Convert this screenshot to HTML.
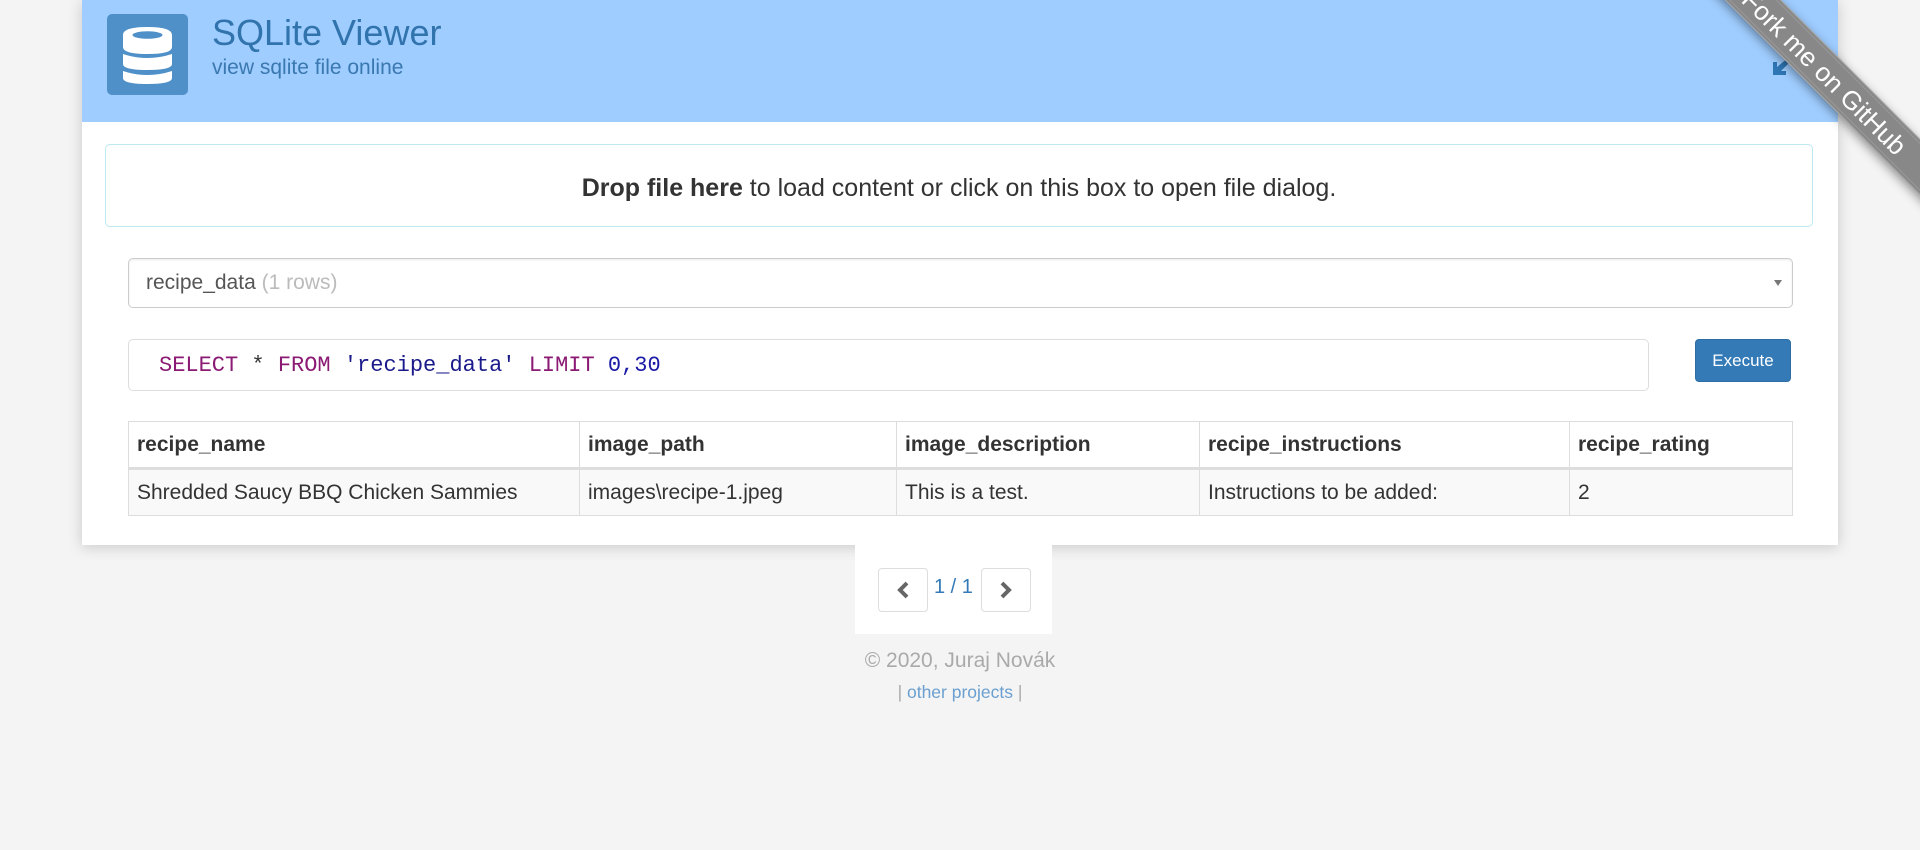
<!DOCTYPE html>
<html><head><meta charset="utf-8"><style>
*{box-sizing:border-box}
html,body{margin:0;padding:0;width:1920px;height:850px;overflow:hidden;background:#f4f4f4;font-family:"Liberation Sans",Arial,sans-serif;color:#333}
.wrap{position:absolute;left:82px;top:0;width:1756px;height:545px;background:#fff;box-shadow:0 2px 14px rgba(0,0,0,.18)}
.hdr{position:absolute;left:0;top:0;width:100%;height:122px;background:#9fcdff}
.icon{position:absolute;left:25px;top:14px;width:81px;height:81px;background:#4f90c8;border-radius:5px}
.t1{position:absolute;left:130px;top:12px;font-size:36px;color:#3173ad}
.t2{position:absolute;left:130px;top:56px;font-size:21px;color:#3a78b0}
.drop{position:absolute;left:23px;top:144px;width:1708px;height:83px;border:1px solid #bce8f1;border-radius:5px;text-align:center;line-height:86px;font-size:25px;color:#333}
.sel{position:absolute;left:46px;top:258px;width:1665px;height:50px;border:1px solid #ccc;border-radius:5px;font-size:21px;line-height:48px;padding-left:17px;color:#555;box-shadow:inset 0 1px 2px rgba(0,0,0,.08)}
.sel span{color:#bbb}
.sel:after{content:"";position:absolute;right:10px;top:21px;border:4px solid transparent;border-top:6px solid #777}
.sql{position:absolute;left:46px;top:339px;width:1521px;height:52px;border:1px solid #ddd;border-radius:5px;font-family:"Liberation Mono",monospace;font-size:22px;line-height:52px;padding-left:30px;color:#333}
.k{color:#8b1a74}.s{color:#1a1a8b}.n{color:#1a1aa6}
.btn{position:absolute;left:1613px;top:339px;width:96px;height:43px;background:#337ab7;border:1px solid #2e6da4;border-radius:4px;color:#fff;font-size:17px;text-align:center;line-height:41px}
table{position:absolute;left:46px;top:421px;width:1665px;border-collapse:collapse;font-size:21px}
td,th{border:1px solid #ddd;padding:0 8px;text-align:left;height:47px}
th{border-bottom:3px solid #ddd;height:47px}
tbody td{background:#f9f9f9;height:47px}
.pag{position:absolute;left:855px;top:545px;width:197px;height:89px;background:#fff}
.pb{position:absolute;top:23px;width:50px;height:44px;border:1px solid #ddd;border-radius:4px;background:#fff}
.pn{position:absolute;left:79px;top:31px;font-size:20px;color:#337ab7}
.foot{position:absolute;left:0;width:1920px;text-align:center;color:#aaa;font-size:21px}
.rib{position:absolute;right:-100px;top:52px;width:390px;height:40px;background:#888;transform:rotate(45deg);color:#fff;text-align:center;font-size:26px;line-height:40px;box-shadow:0 3px 10px rgba(0,0,0,.4);border-top:1px solid #aaa;border-bottom:1px solid #aaa;outline:1px solid #999;outline-offset:-4px}
</style></head><body>
<div class="wrap">
 <div class="hdr">
  <div class="icon"><svg width="81" height="81" viewBox="0 0 81 81"><g fill="#fff">
   <path d="M16 21 Q16 13 40.5 13 Q65 13 65 21 V33 Q65 40 40.5 40 Q16 40 16 33Z"/>
   <path d="M16 40 Q40.5 48 65 40 V50 Q65 56 40.5 56 Q16 56 16 50Z"/>
   <path d="M16 57 Q40.5 65 65 57 V64 Q65 70 40.5 70 Q16 70 16 64Z"/>
  </g><ellipse cx="40.5" cy="21" rx="15" ry="3.8" fill="#4f90c8"/></svg></div>
  <div class="t1">SQLite Viewer</div>
  <div class="t2">view sqlite file online</div>
  <svg style="position:absolute;left:1690px;top:56px" width="20" height="20" viewBox="0 0 20 20"><path d="M16 2 L19 5 L9 15 L14 15 L14 19 L1 19 L1 6 L5 6 L5 11 Z" fill="#2f76b5"/></svg>
 </div>
 <div class="drop"><b>Drop file here</b> to load content or click on this box to open file dialog.</div>
 <div class="sel">recipe_data <span>(1 rows)</span></div>
 <div class="sql"><span class="k">SELECT</span> * <span class="k">FROM</span> <span class="s">'recipe_data'</span> <span class="k">LIMIT</span> <span class="n">0,30</span></div>
 <div class="btn">Execute</div>
 <table>
  <colgroup><col style="width:451px"><col style="width:317px"><col style="width:303px"><col style="width:370px"><col></colgroup>
  <thead><tr><th>recipe_name</th><th>image_path</th><th>image_description</th><th>recipe_instructions</th><th>recipe_rating</th></tr></thead>
  <tbody><tr><td>Shredded Saucy BBQ Chicken Sammies</td><td>images\recipe-1.jpeg</td><td>This is a test.</td><td>Instructions to be added:</td><td>2</td></tr></tbody>
 </table>
</div>
<div class="pag">
 <div class="pb" style="left:23px"><svg width="48" height="42" viewBox="0 0 48 42"><path d="M28 14 L21 21 L28 28" stroke="#666" stroke-width="4" fill="none"/></svg></div>
 <div class="pn">1 / 1</div>
 <div class="pb" style="left:126px"><svg width="48" height="42" viewBox="0 0 48 42"><path d="M20 14 L27 21 L20 28" stroke="#666" stroke-width="4" fill="none"/></svg></div>
</div>
<div class="foot" style="top:649px">© 2020, Juraj Novák</div>
<div class="foot" style="top:682px;font-size:17.5px">| <span style="color:#6a9fd0">other projects</span> |</div>
<div class="rib">Fork me on GitHub</div>
</body></html>
